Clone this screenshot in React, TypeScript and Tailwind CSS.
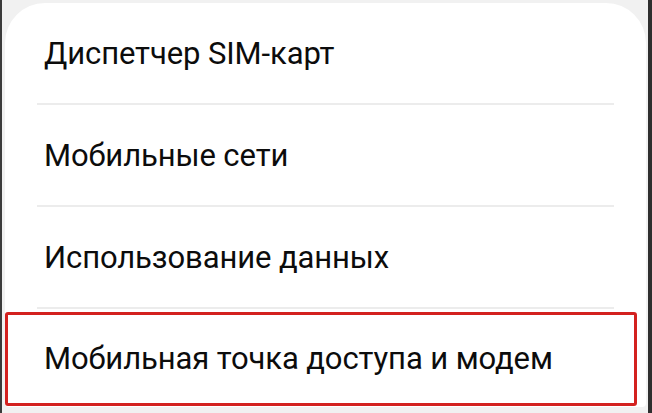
import React from "react";

const items = ["Диспетчер SIM-карт", "Мобильные сети", "Использование данных"];

export default function App() {
  return (
    <div className="w-[652px] h-[413px] overflow-hidden bg-[#f1f1f1] border-l-2 border-l-[#3b3b3b] border-r-4 border-r-[#2e2e2e] font-['Roboto',sans-serif]">
      <div className="mt-[3px] ml-[3px] mr-[2px] bg-white rounded-t-[40px] rounded-b-[4px] pb-px">
        {items.map((label) => (
          <div key={label}>
            <div className="h-[100px] flex items-center pt-[3px] pl-[39px] text-[31px] text-[#0c0c0c] tracking-[-0.1px]">
              {label}
            </div>
            <div className="mx-[32px] h-[2px] bg-[#ececec]" />
          </div>
        ))}
        <div className="mt-[3px] mr-[9px] h-[94px] flex items-center pl-[36px] border-[3px] border-[#d3211f] rounded-[3px] text-[31px] text-[#0c0c0c] tracking-[-0.1px]">
          Мобильная точка доступа и модем
        </div>
      </div>
    </div>
  );
}
